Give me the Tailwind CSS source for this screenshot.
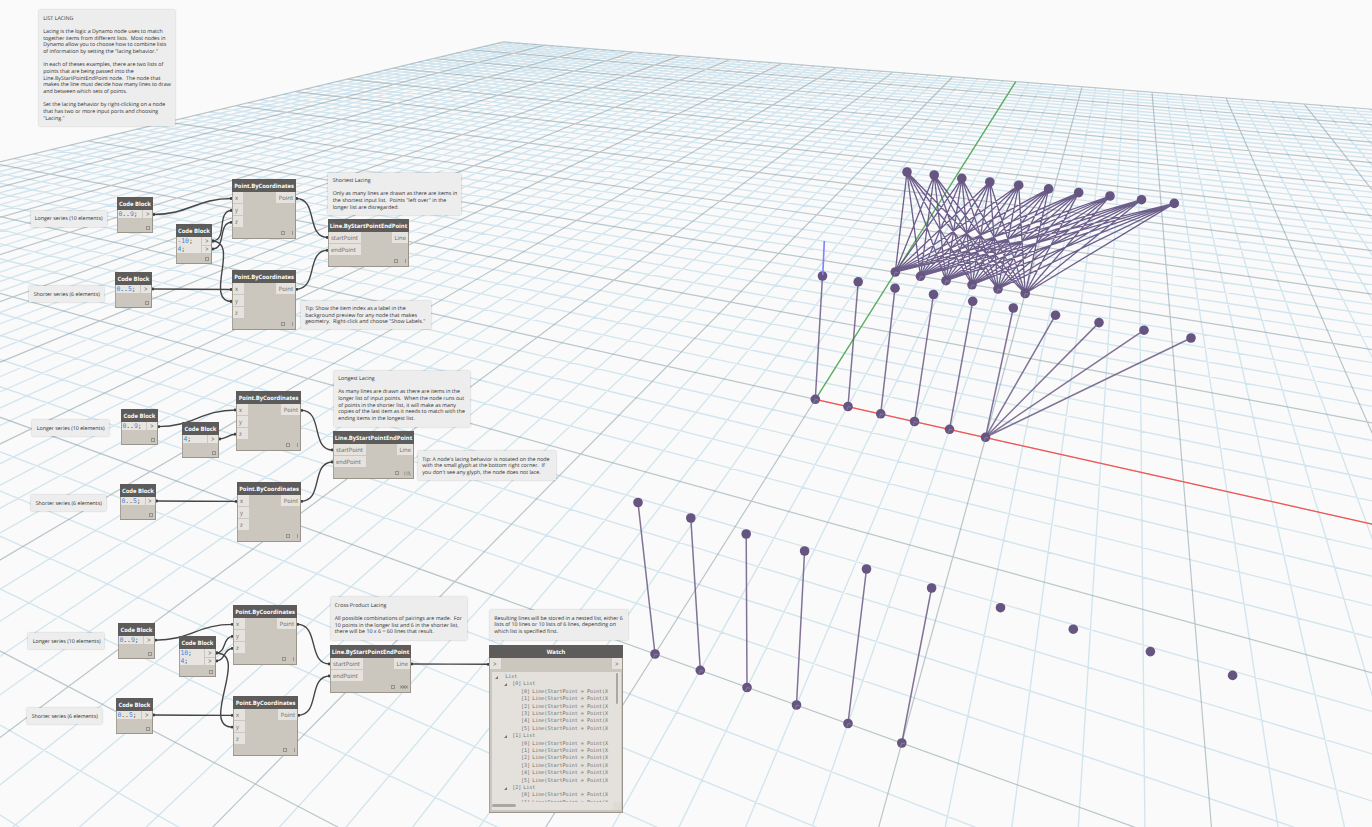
<!DOCTYPE html>
<html lang="en">
<head>
<meta charset="utf-8">
<title>List Lacing</title>
<script src="https://cdn.jsdelivr.net/npm/@tailwindcss/browser@4"></script>
</head>
<body class="bg-[#fafafa]">
<main id="workspace" class="relative w-[1372px] h-[827px] overflow-hidden bg-[#fafafa] font-['Open_Sans','Noto_Sans',sans-serif] [text-rendering:geometricPrecision]">
  <svg id="scene" class="absolute inset-0" width="1372" height="827" viewBox="0 0 1372 827" fill="none"></svg>
  <svg id="wires" class="absolute inset-0" width="1372" height="827" viewBox="0 0 1372 827" fill="none"></svg>
</main>
<script>
// ---------- 3D background preview ----------
const row = (a, b) => a.map((p, i) => [i, b, p[0], p[1]]);
const base = {
  mid: [[815.3,399.3],[848,406.5],[880.7,413.8],[914.5,421.5],[949.5,429.3],[985.5,437.3]],
  low: [[655,654],[700.3,670.3],[747,687.5],[796.5,705],[848,723.5],[901.8,743]],
  up: [[895.3,272],[920.5,276.3],[946,280.7],[972,284.8],[998,289],[1025.2,293.5]],
};
const tops = {
  mid: [[822.5,276],[858.2,281.8],[895,288.2],[933.5,294.5],[972.7,301.3],[1013.3,308],[1055.5,315.2],[1099,322.6],[1144,330.2],[1191,338]],
  low: [[638,502.5],[690.8,518],[746.2,534],[804.6,551],[866.5,569],[931.6,588],[1000.5,607.7],[1073.3,629.2],[1150.4,651.6],[1232.6,675.4]],
  up: [[907,172],[934.2,175],[961.8,178.4],[989.8,182],[1018.7,185.2],[1048.6,188.9],[1078.7,192.6],[1110,196],[1141.5,199.7],[1174.3,203.4]],
};
const known = [...row(base.mid,0), ...row(base.low,-10), ...row(base.up,10),
  [0,50,1015.6,82],[5,50,1081.7,86.7],[10,50,1152,92],[15,50,1226.7,98],[20,50,1304,104],[-50,50,503.5,41.8]];
let H = [0,0,0,0,0,0,0,0];
for (let it = 0; it < 8; it++) {
  const A = Array.from({length: 8}, () => new Array(9).fill(0));
  for (const [x,y,X,Y] of known) {
    const w = 1 / (H[6]*x + H[7]*y + 1);
    for (const r of [[x,y,1,0,0,0,-x*X,-y*X,X],[0,0,0,x,y,1,-x*Y,-y*Y,Y]])
      for (let i = 0; i < 8; i++) for (let j = 0; j < 9; j++) A[i][j] += r[i]*r[j]*w*w;
  }
  for (let i = 0; i < 8; i++) {
    let p = i;
    for (let k = i+1; k < 8; k++) if (Math.abs(A[k][i]) > Math.abs(A[p][i])) p = k;
    [A[i],A[p]] = [A[p],A[i]];
    for (let k = 0; k < 8; k++) if (k !== i) {
      const f = A[k][i]/A[i][i];
      for (let j = i; j < 9; j++) A[k][j] -= f*A[i][j];
    }
  }
  H = A.map((r,i) => r[8]/r[i]);
}
const wOf = (x,y) => H[6]*x + H[7]*y + 1;
const proj = (x,y) => { const w = wOf(x,y); return [(H[0]*x+H[1]*y+H[2])/w, (H[3]*x+H[4]*y+H[5])/w]; };
function seg(x1,y1,x2,y2) {
  let w1 = wOf(x1,y1), w2 = wOf(x2,y2); const e = 0.06;
  if (w1 < e && w2 < e) return '';
  if (w1 < e) { const t = (e-w1)/(w2-w1); x1 += t*(x2-x1); y1 += t*(y2-y1); }
  if (w2 < e) { const t = (e-w2)/(w1-w2); x2 += t*(x1-x2); y2 += t*(y1-y2); }
  const a = proj(x1,y1), b = proj(x2,y2);
  return `M${a[0].toFixed(2)} ${a[1].toFixed(2)}L${b[0].toFixed(2)} ${b[1].toFixed(2)}`;
}
let minor = '', major = '';
for (let i = -50; i <= 50; i++) {
  const d = seg(i,-50,i,50) + seg(-50,i,50,i);
  if (i % 5) minor += d; else major += d;
}
let ray = '';
for (const g of ['mid','low'])
  for (let i = 0; i < (g === 'mid' ? 10 : 6); i++)
    ray += `M${tops[g][i]}L${base[g][Math.min(i,5)]}`;
let cross = '';
for (const t of tops.up) for (const b of base.up) cross += `M${t}L${b}`;
const dots = [...Object.values(base).flat(), ...Object.values(tops).flat()]
  .map(p => `<circle cx="${p[0]}" cy="${p[1]}" r="4.8"/>`).join('');
const ticks = Object.values(base).flat().map(p => `M${p[0]} ${p[1]}l-1.2 3.6M${p[0]} ${p[1]}l3 .8`).join('');
document.getElementById('scene').innerHTML =
  `<path d="${minor}" stroke="#9fcae0" stroke-opacity=".44" stroke-width="1.35"/>
   <path d="${major}" stroke="#7a939d" stroke-opacity=".5" stroke-width="1.2"/>
   <path d="${seg(0,0,50,0)}" stroke="#ff4a4a" stroke-opacity=".95" stroke-width="1.2"/>
   <path d="${seg(0,0,0,50)}" stroke="#50ae50" stroke-opacity=".95" stroke-width="1.2"/>
   <path d="${ray}" stroke="#66557f" stroke-opacity=".82" stroke-width="1.5"/>
   <path d="${cross}" stroke="#625080" stroke-opacity=".92" stroke-width="1.3"/>
   <g fill="#665580">${dots}</g>
   <path d="${ticks}" stroke="#9a9fb4" stroke-opacity=".6" stroke-width=".9"/>
   <path d="M822.8 275L824.3 241" stroke="#7f7fff" stroke-width="1.6"/>`;

// ---------- connectors ----------
const links = [
  [153,214.5,232,198.5],[212,241,232,210.5],[212,249,232,222.3],[212,241,232,301.5],[152,289,232,289.5],[296,198.5,328,237.5],[296,289.3,328,250.3],
  [158,426.6,236,410],[219,439,236,434.2],[156,501,237,501.4],[301,410.3,333,450],[301,501.3,333,462],
  [155,640.2,233,624.4],[216,653,233,636.4],[216,661,233,648.4],[216,653,233,727.2],[153,715,233,715.4],[297,624.3,330,664],[298,715.3,330,676],[411,664,489,664.3],
];
let wire = '', ends = '';
for (const [a,b,c,d] of links) {
  const o = .45*Math.hypot(c-a,d-b);
  wire += `M${a} ${b}C${a+o} ${b} ${c-o} ${d} ${c} ${d}`;
  ends += `<rect x="${a-.2}" y="${b-1.4}" width="2.2" height="2.8" rx=".8"/><rect x="${c-2}" y="${d-1.4}" width="2.2" height="2.8" rx=".8"/>`;
}
document.getElementById('wires').innerHTML = `<path d="${wire}" stroke="#454545" stroke-width="1.4"/><g fill="#3d3d3d">${ends}</g>`;

// ---------- nodes ----------
const out = [];
const glyphs = {
  one: '<span class="ml-[2px] w-px h-[3.5px] bg-[#9a958e]"></span>',
  long: '<svg width="7" height="5" viewBox="0 0 7 5" fill="none" stroke="#8f8b84" stroke-width=".7"><path d="M.8 .5V4.5M3 .5V4.5M4.9 .5L6.6 4.5M4.9 .5V4.5"/></svg>',
  cross: '<svg width="8" height="4" viewBox="0 0 8 4" fill="none" stroke="#6d6963" stroke-width=".7"><path d="M.3 .5L2.7 3.5M2.7 .5L.3 3.5M2.9 .5L5.3 3.5M5.3 .5L2.9 3.5M5.4 .5L7.8 3.5M7.8 .5L5.4 3.5"/></svg>',
};
const frame = (x,y,w,h,title,body) => out.push(
  `<section class="absolute flex flex-col bg-[#cbc6be] border-r border-b border-[#9a958c] shadow-[inset_1px_0_0_#a5a098]" style="left:${x}px;top:${y}px;width:${w}px;height:${h}px">
    <h2 class="-mr-px h-[13px] pt-[2.5px] shrink-0 flex items-center justify-center bg-[#5e5c5a] text-white text-[5.85px] leading-none font-bold whitespace-nowrap">${title}</h2>${body}</section>`);
const box = '<span class="size-[4px] border-[0.5px] border-[#96918a]"></span>';
const chev = '<svg width="4" height="4" viewBox="0 0 4 4" fill="none" stroke="#7d7b78" stroke-width=".7"><path d="M.5 .6L3.2 2L.5 3.4"/></svg>';
function code(x,y,w,h,lines,div) {
  const l = lines.map(t => `<div class="h-[8px] flex items-center"><span class="text-[#3f86e0]">${t.slice(0,-1).replace('..','<span class="text-[#3c3c3c]">..</span>')}</span><span class="text-[#555]">;</span></div>`).join('');
  const p = lines.map(() => `<div class="flex-1 flex items-center justify-center bg-[#e8e5e1]">${chev}</div>`).join('');
  frame(x,y,w,h,'Code Block',
   `<div class="flex gap-[1px] pl-px"><div class="bg-[#e8e5e1] pl-[0.5px] font-['DejaVu_Sans_Mono',monospace] text-[6.4px] leading-none tracking-[-0.05px]" style="width:${div}px">${l}</div><div class="flex-1 flex flex-col gap-px">${p}</div></div>
    <div class="mt-auto flex justify-end pr-[2.5px] pb-[2.5px]">${box}</div>`);
}
function func(x,y,w,h,title,ins,outp,iw,ow,glyph) {
  const i = ins.map(t => `<div class="h-[11px] pt-[2px] flex items-center pl-[2px] bg-[#e6e3df]">${t}</div>`).join('');
  frame(x,y,w,h,title,
   `<div class="flex justify-between items-start pl-px text-[5.9px] leading-none text-[#6a6866] whitespace-nowrap"><div class="flex flex-col gap-px" style="width:${iw}px">${i}</div><div class="h-[11px] pt-[2px] flex items-center justify-end pr-[2px] bg-[#e6e3df]" style="width:${ow}px">${outp}</div></div>
    <div class="absolute right-[2.5px] bottom-[3px] h-[4px] flex items-center gap-[5px]">${box}${glyphs[glyph]}</div>`);
}
const pt = (x,y,w,iw) => func(x,y,w,60,'Point.ByCoordinates',['x','y','z'],'Point',iw,19.5,'one');
const ln = (x,y,g) => func(x,y,81,48,'Line.ByStartPointEndPoint',['startPoint','endPoint'],'Line',32,16.5,g);
code(117,197,36,36,['0..9;'],24); code(176,224,36,40,['-10;','4;'],24); code(115,272,37,36,['0..5;'],23.5);
pt(232,179,64,10); pt(232,270,64,11); ln(328,219,'one');
code(121,409,37,36,['0..9;'],23.5); code(182,422,37,36,['4;'],23.5); code(120,484,36,36,['0..5;'],23.5);
pt(236,391,65,11); pt(237,482,64,11); ln(333,431,'long');
code(118,623,37,36,['0..9;'],23.5); code(179,636,37,41,['10;','4;'],23.5); code(116,698,37,36,['0..5;'],23.5);
pt(233,605,64,11); pt(233,696,65,11); ln(330,645,'cross');

// ---------- watch node ----------
const tri = '<svg class="shrink-0" width="3" height="3" viewBox="0 0 3 3"><path d="M3 0V3H0Z" fill="#77736e"/></svg>';
const tree = [`<div class="h-[7.42px] flex items-center gap-[7px] pl-[3.2px]">${tri}<span>List</span></div>`];
for (let g = 0; g < 3; g++) {
  tree.push(`<div class="h-[7.42px] flex items-center pl-[12px]">${tri}<span class="ml-[5.2px] w-[11px]">[${g}]</span><span>List</span></div>`);
  for (let i = 0; i < (g === 2 ? 2 : 6); i++)
    tree.push(`<div class="h-[7.42px] flex items-center pl-[29px]"><span class="w-[11.2px] shrink-0">[${i}]</span><span>Line(StartPoint = Point(X</span></div>`);
}
frame(489,645,134,168,'Watch',
 `<div class="flex justify-between pl-px"><span class="w-[11px] h-[11px] pl-[2.5px] flex items-center bg-[#e6e3df]">${chev}</span><span class="w-[10.5px] h-[11px] flex items-center justify-center bg-[#e6e3df]">${chev}</span></div>
  <div class="mt-[3px] ml-[3px] w-[129px] h-[138px] bg-[#e4e1dc] flex flex-col">
    <div class="flex h-[130px]">
      <div class="w-[121px] h-full pt-[1.8px] overflow-hidden whitespace-pre font-['DejaVu_Sans_Mono',monospace] text-[5.05px] leading-none text-[#706e6b]">${tree.join('')}</div>
      <div class="w-[8px] flex justify-center pt-[0.5px]"><span class="w-[2.5px] h-[31.5px] rounded-full bg-[#a9a7a3]"></span></div>
    </div>
    <div class="flex-1 flex justify-between"><span class="mt-[2px] w-[24px] h-[2.5px] rounded-full bg-[#a9a7a3]"></span><span class="w-[8px] bg-[#dedbd6]"></span></div>
  </div>`);

// ---------- notes ----------
const note = (x,y,w,h,tx,cy,lines) => out.push(
  `<article class="absolute bg-[#ededed] shadow-[0_0_2px_rgba(0,0,0,0.25)] text-[5.3px] leading-[6.67px] text-[#303030] whitespace-pre" style="left:${x}px;top:${y}px;width:${w}px;height:${h}px;padding:${cy-y-3.4}px 0 0 ${tx-x-.3}px">${lines.join('\n')}</article>`);
note(38.5,9.5,136.5,116.5,43.5,18,['LIST LACING','','Lacing is the logic a Dynamo node uses to match','together items from different lists.  Most nodes in','Dynamo allow you to choose how to combine lists','of information by setting the "lacing behavior."','','In each of theses examples, there are two lists of','points that are being passed into the','Line.ByStartPointEndPoint node.  The node that','makes the line must decide how many lines to draw','and between which sets of points.','','Set the lacing behavior by right-clicking on a node','that has two or more input ports and choosing','"Lacing."']);
note(327.5,172.5,133,42.5,333,180.3,['Shortest Lacing','','Only as many lines are drawn as there are items in','the shortest input list.  Points "left over" in the','longer list are disregarded.']);
note(301,301,130,28,305.5,308.3,['Tip: Show the item index as a label in the','background preview for any node that makes','geometry.  Right-click and choose "Show Labels."']);
note(333.5,370.5,136.5,56,338.5,378.3,['Longest Lacing','','As many lines are drawn as there are items in the','longer list of input points.  When the node runs out','of points in the shorter list, it will make as many','copies of the last item as it needs to match with the','ending items in the longest list.']);
note(418,451,137.5,29,422.5,459.2,["Tip: A node's lacing behavior is notated on the node",'with the small glyph at the bottom right corner.  If',"you don't see any glyph, the node does not lace."]);
note(330.5,597,136.5,43,335,605.2,['Cross Product Lacing','','All possible combinations of pairings are made.  For','10 points in the longer list and 6 in the shorter list,','there will be 10 x 6 = 60 lines that result.']);
note(489.5,610,138.5,29.5,494.5,618.2,['Resulting lines will be stored in a nested list, either 6','lists of 10 lines or 10 lists of 6 lines, depending on','which list is specified first.']);
const L = 'Longer series (10 elements)', S = 'Shorter series (6 elements)';
note(30.5,211,76,15.5,35,218,[L]); note(29,286,75,16,34,294,[S]);
note(32,420,76.5,16,37,428,[L]); note(31,495,74.5,16,36,503,[S]);
note(27.5,633,76.5,16,33,641,[L]); note(26.5,708,75,16,32,716,[S]);
document.getElementById('workspace').insertAdjacentHTML('beforeend', out.join(''));
</script>
</body>
</html>
